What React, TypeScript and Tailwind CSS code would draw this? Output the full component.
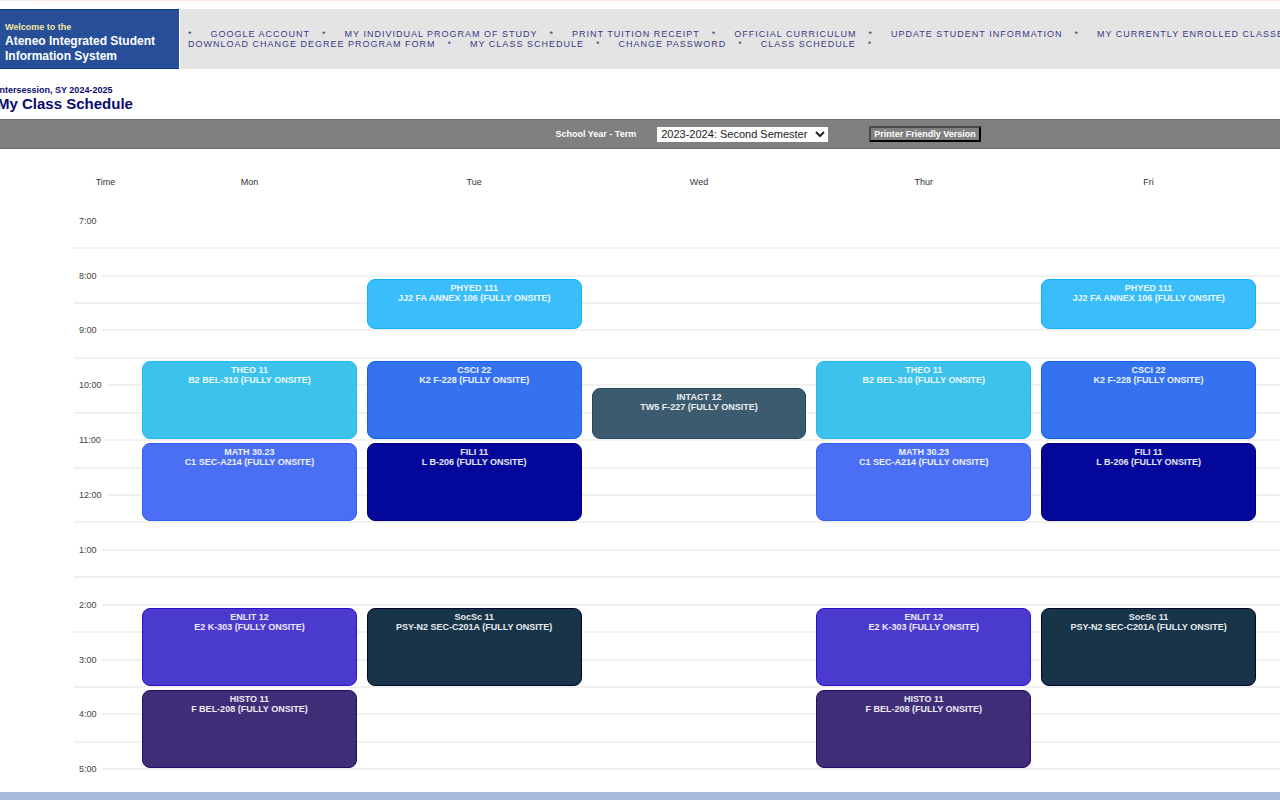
import React from "react";

type Meeting = {
  course: string;
  room: string;
  days: number[];
  start: number;
  end: number;
  color: string;
};

const menuRows: string[][] = [
  [
    "GOOGLE ACCOUNT",
    "MY INDIVIDUAL PROGRAM OF STUDY",
    "PRINT TUITION RECEIPT",
    "OFFICIAL CURRICULUM",
    "UPDATE STUDENT INFORMATION",
    "MY CURRENTLY ENROLLED CLASSES",
  ],
  [
    "DOWNLOAD CHANGE DEGREE PROGRAM FORM",
    "MY CLASS SCHEDULE",
    "CHANGE PASSWORD",
    "CLASS SCHEDULE",
  ],
];

const days = ["Mon", "Tue", "Wed", "Thur", "Fri"];

// Half-hour slots from 7:00 to 5:00; the half hours carry no label.
const slots = Array.from({ length: 21 }, (_, i) => {
  const hour = 7 + Math.floor(i / 2);
  return i % 2 === 0 ? `${hour > 12 ? hour - 12 : hour}:00` : "";
});

const meetings: Meeting[] = [
  { course: "PHYED 111", room: "JJ2 FA ANNEX 106 (FULLY ONSITE)", days: [1, 4], start: 8, end: 9, color: "bg-[#39bdfb] border-[#12b2fb]" },
  { course: "THEO 11", room: "B2 BEL-310 (FULLY ONSITE)", days: [0, 3], start: 9.5, end: 11, color: "bg-[#3dc2ec] border-[#1dbbef]" },
  { course: "CSCI 22", room: "K2 F-228 (FULLY ONSITE)", days: [1, 4], start: 9.5, end: 11, color: "bg-[#3572ef] border-[#1560ef]" },
  { course: "INTACT 12", room: "TW5 F-227 (FULLY ONSITE)", days: [2], start: 10, end: 11, color: "bg-[#3c5b6f] border-[#1f4862]" },
  { course: "MATH 30.23", room: "C1 SEC-A214 (FULLY ONSITE)", days: [0, 3], start: 11, end: 12.5, color: "bg-[#4a6ff5] border-[#335df3]" },
  { course: "FILI 11", room: "L B-206 (FULLY ONSITE)", days: [1, 4], start: 11, end: 12.5, color: "bg-[#03089b] border-[#00007d]" },
  { course: "ENLIT 12", room: "E2 K-303 (FULLY ONSITE)", days: [0, 3], start: 14, end: 15.5, color: "bg-[#4b3ace] border-[#2f0fc8]" },
  { course: "SocSc 11", room: "PSY-N2 SEC-C201A (FULLY ONSITE)", days: [1, 4], start: 14, end: 15.5, color: "bg-[#173448] border-[#030725]" },
  { course: "HISTO 11", room: "F BEL-208 (FULLY ONSITE)", days: [0, 3], start: 15.5, end: 17, color: "bg-[#402d78] border-[#270968]" },
];

// The grid is divided into quarter hours, with each slot's line at its middle.
const rowOf = (hour: number) => (hour - 7) * 4 + 2;

function Header() {
  return (
    <header className="mt-2 flex gap-px">
      <div className="w-[179px] shrink-0 border-y border-[#0a3a8c] bg-[#264f98] px-[5px] pt-3 pb-1 font-bold">
        <p className="text-[9px] leading-[10px] text-[#f5e6a0]">Welcome to the</p>
        <p className="mt-0.5 text-[12px] leading-[15px] text-white">Ateneo Integrated Student Information System</p>
      </div>
      <nav
        aria-label="Main"
        className="flex min-w-0 flex-1 flex-col justify-center overflow-hidden bg-[#e4e4e4] pl-2 text-[9px] leading-[10px] tracking-[1px] whitespace-nowrap text-[#3a3a86]"
      >
        {menuRows.map((row, r) => (
          <div key={r} className="flex">
            {r === 0 && <span className="mr-[18px]">*</span>}
            {row.map((item) => (
              <React.Fragment key={item}>
                <a href="#">{item}</a>
                <span className="mr-[18px] ml-3">*</span>
              </React.Fragment>
            ))}
          </div>
        ))}
      </nav>
    </header>
  );
}

function TermBar() {
  return (
    <form
      onSubmit={(e) => e.preventDefault()}
      className="mt-[7px] flex h-[30px] items-center border-y border-[#707070] bg-[#808080] pl-[43.4%] text-[9px] leading-3 font-bold text-white"
    >
      <label htmlFor="term" className="mr-[21px] whitespace-nowrap">School Year - Term</label>
      <select id="term" className="h-[15px] w-[171px] bg-white text-[11px] leading-[15px] font-normal text-[#222]">
        <option>2023-2024: Second Semester</option>
      </select>
      <button
        type="button"
        className="ml-[41px] h-4 border-2 border-t-[#4a4a4a] border-r-black border-b-black border-l-[#4a4a4a] px-[3px] whitespace-nowrap"
      >
        Printer Friendly Version
      </button>
    </form>
  );
}

function Schedule() {
  return (
    <main className="pt-7 pl-[74px] text-[9px] leading-[10px]">
      <div className="grid grid-cols-[63px_repeat(5,minmax(0,1fr))_19px] pb-5 text-center text-[#333]">
        <span>Time</span>
        {days.map((day) => (
          <span key={day}>{day}</span>
        ))}
      </div>
      <div className="grid h-[576px] grid-cols-[63px_repeat(5,minmax(0,1fr))_19px] grid-rows-[repeat(42,minmax(0,1fr))]">
        {slots.map((label, i) => (
          <div
            key={i}
            className="col-span-full col-start-1 flex items-center"
            style={{ gridRow: `${i * 2 + 1} / span 2` }}
          >
            {label && <span className="px-[5px] text-[#444]">{label}</span>}
            {i > 0 && <span className="h-0.5 flex-1 bg-[#f1f1f1]" />}
          </div>
        ))}
        {meetings.flatMap((m) =>
          m.days.map((day) => (
            <div
              key={`${m.course}-${day}`}
              className={`mx-[5px] mt-[3px] mb-px rounded-lg border pt-[3px] text-center font-bold text-white/90 ${m.color}`}
              style={{ gridColumn: day + 2, gridRow: `${rowOf(m.start)} / ${rowOf(m.end)}` }}
            >
              <p>{m.course}</p>
              <p>{m.room}</p>
            </div>
          )),
        )}
      </div>
    </main>
  );
}

export default function App() {
  return (
    <div className="overflow-hidden bg-white font-['Liberation_Sans',Arial,sans-serif]">
      <div className="flex h-px bg-[#fde8dd]">
        <span className="w-[33px] bg-[#e9eefa]" />
      </div>
      <Header />
      <div className="-ml-[3px] pt-4 font-bold text-[#0a0a6e]">
        <p className="text-[9px] leading-[10px]">Intersession, SY 2024-2025</p>
        <h1 className="text-[15px] leading-[17px]">My Class Schedule</h1>
      </div>
      <TermBar />
      <Schedule />
      <footer className="mt-[9px] h-2 bg-[#a8bbdf]" />
    </div>
  );
}
